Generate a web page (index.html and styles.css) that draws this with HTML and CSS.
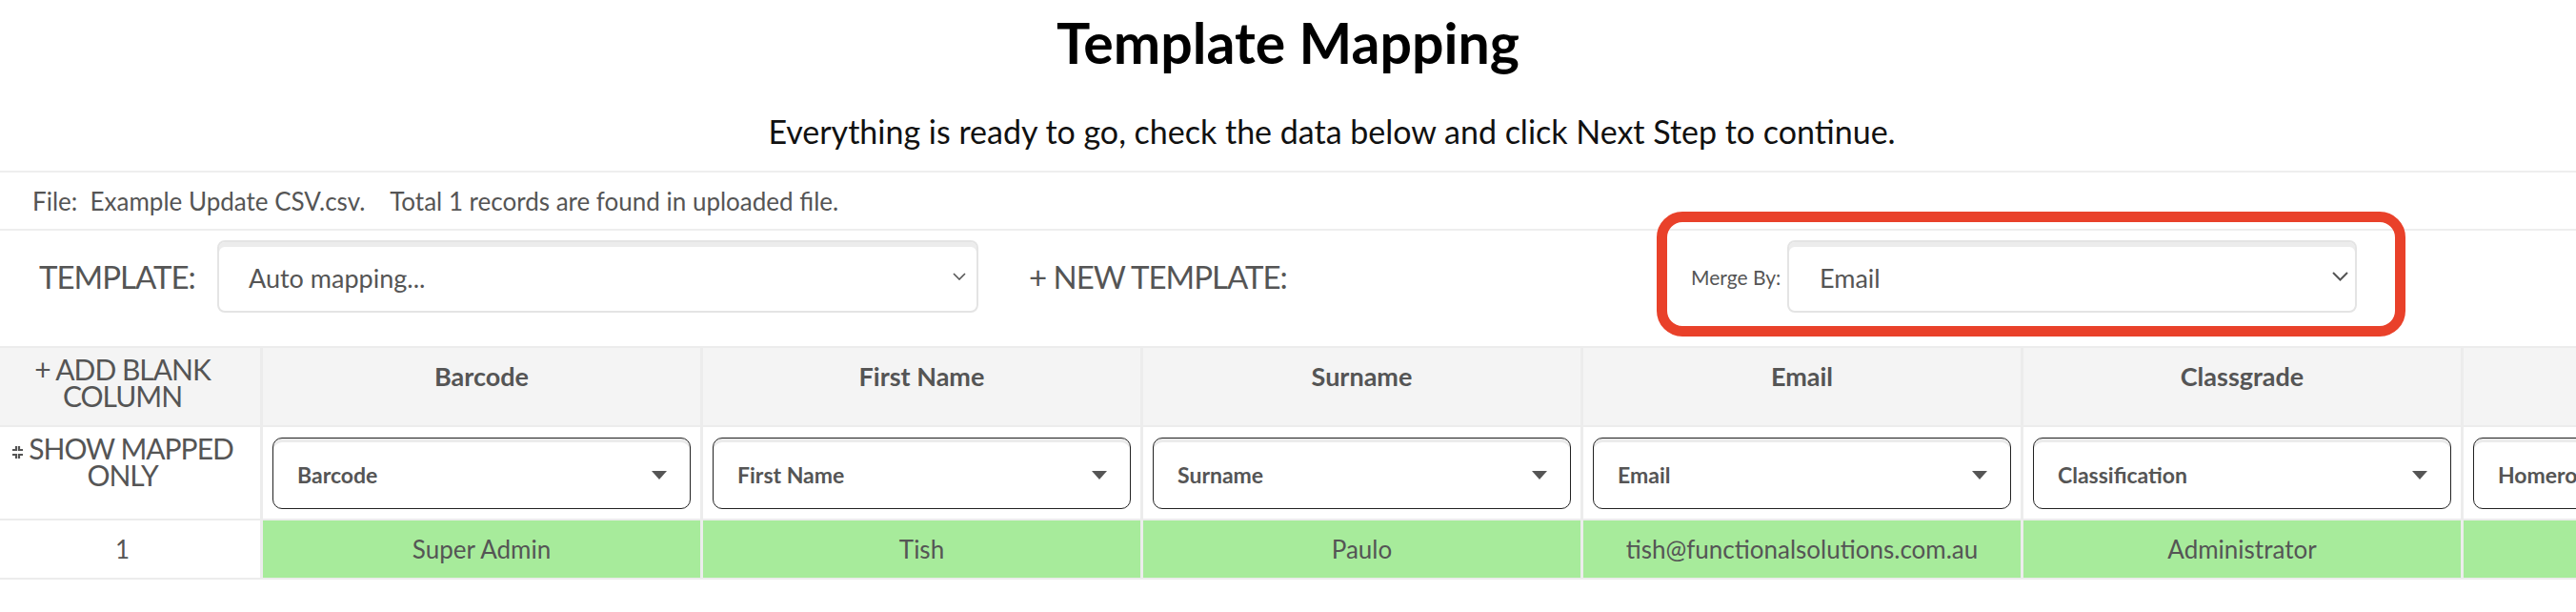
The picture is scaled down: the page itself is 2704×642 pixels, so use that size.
FILE: index.html
```html
<!DOCTYPE html>
<html lang="en">
<head>
<meta charset="utf-8">
<title>Template Mapping</title>
<link rel="stylesheet" href="styles.css">
</head>
<body>
<div class="page">
  <header class="intro">
    <h1 class="title">Template Mapping</h1>
    <p class="subtitle">Everything is ready to go, check the data below and click Next Step to continue.</p>
  </header>

  <div class="file-info">File:  Example Update CSV.csv.    Total 1 records are found in uploaded file.</div>

  <div class="toolbar">
    <div class="tpl-label">TEMPLATE:</div>
    <div class="dropdown tpl-select">
      <span class="dropdown-text">Auto mapping...</span>
      <svg class="chev chev-sm" viewBox="0 0 14 8" width="14" height="8"><polyline points="1,1 7,7 13,1"/></svg>
    </div>
    <div class="new-tpl">+ NEW TEMPLATE:</div>
    <div class="merge">
      <span class="merge-label">Merge By:</span>
      <div class="dropdown merge-select">
        <span class="dropdown-text merge-text">Email</span>
        <svg class="chev chev-lg" viewBox="0 0 17 10" width="17" height="10"><polyline points="1,1 8.5,8.5 16,1"/></svg>
      </div>
      <div class="highlight"></div>
    </div>
  </div>

  <div class="grid">
    <div class="cell head action action-add">
      <div class="action-text">+ ADD BLANK<br>COLUMN</div>
    </div>
    <div class="cell head th">Barcode</div>
    <div class="cell head th">First Name</div>
    <div class="cell head th">Surname</div>
    <div class="cell head th">Email</div>
    <div class="cell head th">Classgrade</div>
    <div class="cell head th">Homeroom</div>

    <div class="cell map action action-map">
      <div class="action-text"><svg class="compress" viewBox="0 0 13 15" width="13" height="15"><path d="M1 5H5V1M8 1V5H12M1 10H5V14M12 10H8V14"/></svg>SHOW MAPPED<br>ONLY</div>
    </div>
    <div class="cell map"><div class="map-select"><span>Barcode</span><i class="caret"></i></div></div>
    <div class="cell map"><div class="map-select"><span>First Name</span><i class="caret"></i></div></div>
    <div class="cell map"><div class="map-select"><span>Surname</span><i class="caret"></i></div></div>
    <div class="cell map"><div class="map-select"><span>Email</span><i class="caret"></i></div></div>
    <div class="cell map"><div class="map-select"><span>Classification</span><i class="caret"></i></div></div>
    <div class="cell map"><div class="map-select"><span>Homeroom</span><i class="caret"></i></div></div>

    <div class="cell idx">1</div>
    <div class="cell val">Super Admin</div>
    <div class="cell val">Tish</div>
    <div class="cell val">Paulo</div>
    <div class="cell val">tish@functionalsolutions.com.au</div>
    <div class="cell val">Administrator</div>
    <div class="cell val"></div>
  </div>
</div>
</body>
</html>
```

FILE: styles.css
```css
html, body {
  margin: 0;
  padding: 0;
  background: #ffffff;
}

body {
  width: 2704px;
  height: 642px;
  overflow: hidden;
  font-family: Lato, "Liberation Sans", sans-serif;
  color: #555555;
}

.page {
  width: 2704px;
}

/* ---------- intro ---------- */
.intro {
  padding: 12px 0 22px;
  text-align: center;
}

.title {
  margin: 0;
  font-size: 59px;
  line-height: 66px;
  font-weight: 700;
  color: #000000;
}

.subtitle {
  margin: 40px 0 0;
  padding-left: 92px;
  font-size: 34px;
  line-height: 39px;
  color: #111111;
}

/* ---------- file info ---------- */
.file-info {
  height: 59px;
  display: flex;
  align-items: center;
  padding-left: 34px;
  border-top: 2px solid #eeeeee;
  border-bottom: 2px solid #eeeeee;
  font-size: 26px;
  white-space: pre;
  color: #555555;
}

/* ---------- toolbar ---------- */
.toolbar {
  display: flex;
  align-items: center;
  height: 76px;
  padding: 10px 0 35px 41px;
}

.tpl-label,
.new-tpl,
.action-text {
  font-weight: 400;
  color: #555555;
  letter-spacing: -1px;
}

.tpl-label {
  width: 187px;
  font-size: 33px;
}

.dropdown {
  box-sizing: border-box;
  height: 76px;
  display: flex;
  align-items: center;
  justify-content: space-between;
  border: 2px solid #e4e4e4;
  border-radius: 8px;
  box-shadow: inset 0 5px 0 #ececec;
  background: #ffffff;
}

.dropdown-text {
  font-size: 27px;
  color: #555555;
  padding-top: 2px;
}

.tpl-select {
  width: 799px;
  padding: 0 11px 0 31px;
}

.chev {
  fill: none;
  stroke: #555555;
  stroke-width: 1.6;
}

.new-tpl {
  margin-left: 53px;
  width: 695px;
  font-size: 33px;
}

.merge {
  position: relative;
  display: flex;
  align-items: center;
}

.merge-label {
  width: 101px;
  font-size: 21px;
  color: #555555;
}

.merge-select {
  width: 598px;
  padding: 0 7px 0 32px;
}

.chev-lg {
  stroke-width: 2;
}

.highlight {
  position: absolute;
  top: -30px;
  left: -36px;
  right: -51px;
  bottom: -25px;
  border: 11px solid #e9412a;
  border-radius: 27px;
  pointer-events: none;
}

/* ---------- mapping grid ---------- */
.grid {
  display: grid;
  grid-template-columns: 273px repeat(6, 459px);
  grid-template-rows: 81px 96px 60px;
  column-gap: 3px;
  row-gap: 2px;
  width: 3045px;
  background: #ececec;
  border-top: 2px solid #ececec;
  border-bottom: 2px solid #ececec;
}

.cell {
  box-sizing: border-box;
  display: flex;
  justify-content: center;
  text-align: center;
}

.head {
  background: #f4f4f4;
}

.th {
  align-items: flex-start;
  padding-top: 14px;
  font-size: 27px;
  font-weight: 700;
  line-height: 31px;
  color: #555555;
}

.map {
  background: #ffffff;
  align-items: center;
  padding: 0 10px;
}

.action {
  padding-right: 16px;
}

.action-text {
  font-size: 30px;
  line-height: 28px;
  white-space: nowrap;
}

.action-add {
  align-items: flex-start;
  padding-top: 8px;
}

.action-map {
  align-items: flex-start;
  padding: 8px 16px 0 0;
}

.compress {
  fill: none;
  stroke: #555555;
  stroke-width: 2.2;
  margin-right: 5px;
  vertical-align: 0;
}

.map-select {
  box-sizing: border-box;
  width: 100%;
  height: 75px;
  display: flex;
  align-items: center;
  justify-content: space-between;
  padding: 4px 24px 0 25px;
  border: 1.5px solid #222222;
  border-radius: 10px;
  box-shadow: inset 0 4px 0 #ebebeb;
  font-size: 23px;
  font-weight: 700;
  color: #555555;
  white-space: nowrap;
  overflow: hidden;
}

.caret {
  width: 0;
  height: 0;
  border-left: 8px solid transparent;
  border-right: 8px solid transparent;
  border-top: 9px solid #555555;
  flex: none;
}

.idx {
  background: #ffffff;
  align-items: center;
  padding-right: 16px;
  font-size: 26px;
}

.val {
  background: #a7eb9b;
  align-items: center;
  font-size: 26px;
  color: #555555;
}
```
